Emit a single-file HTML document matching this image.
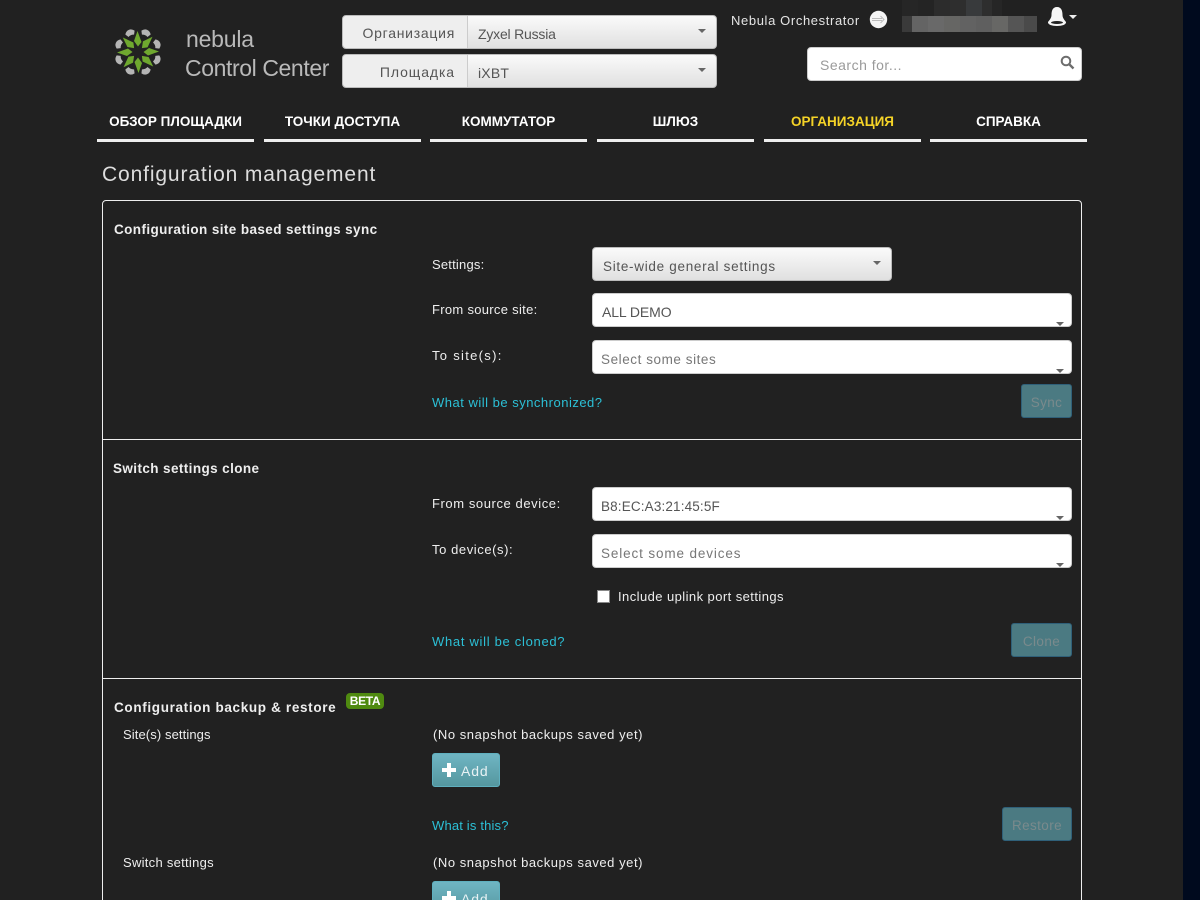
<!DOCTYPE html>
<html><head><meta charset="utf-8"><title>Configuration management</title>
<style>
html,body{margin:0;padding:0;width:1200px;height:900px;overflow:hidden;background:#212121}
body{position:relative;font-family:"Liberation Sans","DejaVu Sans",sans-serif;font-size:13px;color:#eee}
.a{position:absolute;box-sizing:border-box}
.t{position:absolute;white-space:nowrap;line-height:16px;height:16px}
.nav{position:absolute;top:112px;height:30px;width:157px;border-bottom:3px solid #eee;box-sizing:border-box;text-align:center;color:#fff;font-weight:bold;font-size:13.5px;line-height:19px;letter-spacing:0}
.sel{background:linear-gradient(#fafafa,#e0e0e0);border:1px solid #bbb;border-radius:4px}
.inp{background:#fff;border:1px solid #ccc;border-radius:4px}
.car{position:absolute;width:0;height:0;border-left:4px solid transparent;border-right:4px solid transparent;border-top:4px solid #666}
.lab{letter-spacing:.42px;color:#eee;margin-top:1px}
.h{font-weight:bold;font-size:13.5px;color:#eee;margin-top:1px;letter-spacing:.4px}
.lnk{color:#2cc0d6;letter-spacing:.5px;margin-top:1px}
.dis{background:#4b7a82;border:1px solid #2f6079;border-radius:3px;color:#7a8a8c;text-align:center;font-size:13.5px;line-height:35px;letter-spacing:.4px}
.add{background:linear-gradient(#6fb5c3,#55979f);border:1px solid #5fb0bf;border-radius:3px;color:#eef;font-size:14px;letter-spacing:.6px}
.line{position:absolute;left:102px;width:980px;height:1px;background:#eee}
.m{position:absolute;width:16px;height:16px}
</style></head><body>

<div class="a" style="left:1183px;top:0;width:17px;height:900px;background:#000a1e"></div>

<!-- logo -->
<svg class="a" style="left:108px;top:23px" width="60" height="58" viewBox="-30 -29 60 58">
<g fill="#b5b5b5">
<path d="M-5 -21 Q-3 -24 0 -24 Q3 -24 5 -21 L3 -17.500 Q0 -19 -3 -17.500 Z" transform="rotate(22.5)"/>
<path d="M-5 -21 Q-3 -24 0 -24 Q3 -24 5 -21 L3 -17.500 Q0 -19 -3 -17.500 Z" transform="rotate(67.5)"/>
<path d="M-5 -21 Q-3 -24 0 -24 Q3 -24 5 -21 L3 -17.500 Q0 -19 -3 -17.500 Z" transform="rotate(112.5)"/>
<path d="M-5 -21 Q-3 -24 0 -24 Q3 -24 5 -21 L3 -17.500 Q0 -19 -3 -17.500 Z" transform="rotate(157.5)"/>
<path d="M-5 -21 Q-3 -24 0 -24 Q3 -24 5 -21 L3 -17.500 Q0 -19 -3 -17.500 Z" transform="rotate(202.5)"/>
<path d="M-5 -21 Q-3 -24 0 -24 Q3 -24 5 -21 L3 -17.500 Q0 -19 -3 -17.500 Z" transform="rotate(247.5)"/>
<path d="M-5 -21 Q-3 -24 0 -24 Q3 -24 5 -21 L3 -17.500 Q0 -19 -3 -17.500 Z" transform="rotate(292.5)"/>
<path d="M-5 -21 Q-3 -24 0 -24 Q3 -24 5 -21 L3 -17.500 Q0 -19 -3 -17.500 Z" transform="rotate(337.5)"/>
</g>
<g fill="#6fa82f">
<path d="M-0.500 -21 L3.500 -10 L0 -5.500 L-4 -11 Z"/>
<path d="M-0.500 -21 L3.500 -10 L0 -5.500 L-4 -11 Z" transform="rotate(45)"/>
<path d="M-0.500 -21 L3.500 -10 L0 -5.500 L-4 -11 Z" transform="rotate(90)"/>
<path d="M-0.500 -21 L3.500 -10 L0 -5.500 L-4 -11 Z" transform="rotate(135)"/>
<path d="M-0.500 -21 L3.500 -10 L0 -5.500 L-4 -11 Z" transform="rotate(180)"/>
<path d="M-0.500 -21 L3.500 -10 L0 -5.500 L-4 -11 Z" transform="rotate(225)"/>
<path d="M-0.500 -21 L3.500 -10 L0 -5.500 L-4 -11 Z" transform="rotate(270)"/>
<path d="M-0.500 -21 L3.500 -10 L0 -5.500 L-4 -11 Z" transform="rotate(315)"/>
</g>
</svg>
<div class="t" style="left:186px;top:29px;font-size:23px;line-height:20px;height:20px;color:#b9b9b9;letter-spacing:-.2px">nebula</div>
<div class="t" style="left:185px;top:58px;font-size:23px;line-height:20px;height:20px;color:#b9b9b9;letter-spacing:-.4px">Control Center</div>

<!-- org/site selects -->
<div class="a sel" style="left:342px;top:15px;width:375px;height:34px"></div>
<div class="a" style="left:343px;top:16px;width:125px;height:32px;background:#eee;border-right:1px solid #ccc;border-radius:4px 0 0 4px"></div>
<div class="t" style="right:745px;top:25px;color:#555;font-size:14px;letter-spacing:.73px">Организация</div>
<div class="t" style="left:478px;top:26px;color:#555;font-size:14px;letter-spacing:-.2px">Zyxel Russia</div>
<div class="car" style="left:698px;top:29px"></div>
<div class="a sel" style="left:342px;top:54px;width:375px;height:34px"></div>
<div class="a" style="left:343px;top:55px;width:125px;height:32px;background:#eee;border-right:1px solid #ccc;border-radius:4px 0 0 4px"></div>
<div class="t" style="right:745px;top:64px;color:#555;font-size:14px;letter-spacing:.9px">Площадка</div>
<div class="t" style="left:478px;top:65px;color:#555;font-size:14px;letter-spacing:.2px">iXBT</div>
<div class="car" style="left:698px;top:68px"></div>

<!-- top right -->
<div class="t" style="left:731px;top:13px;color:#e4e4e4;letter-spacing:.62px">Nebula Orchestrator</div>
<svg class="a" style="left:869px;top:10px" width="19" height="19" viewBox="0 0 19 19"><circle cx="9.500" cy="9.500" r="8.700" fill="#f4f4f4"/><path d="M3 8.500H13M3 10.500H13M11.500 6L15 9.500L11.500 13" fill="none" stroke="#bbb" stroke-width="1"/></svg>
<!-- pixelated mosaic -->
<div class="m" style="left:902px;top:0;background:#262626"></div>
<div class="m" style="left:918px;top:0;background:#242424"></div>
<div class="m" style="left:934px;top:0;background:#2c2c2c"></div>
<div class="m" style="left:950px;top:0;background:#2e2e2e"></div>
<div class="m" style="left:966px;top:0;background:#383a3c"></div>
<div class="m" style="left:982px;top:0;width:10px;background:#2e2e2e"></div>
<div class="m" style="left:992px;top:0;width:10px;background:#262626"></div>
<div class="m" style="left:902px;top:16px;width:10px;background:#3a3a3a"></div>
<div class="m" style="left:912px;top:16px;background:#646464"></div>
<div class="m" style="left:928px;top:16px;background:#696969"></div>
<div class="m" style="left:944px;top:16px;background:#666664"></div>
<div class="m" style="left:960px;top:16px;background:#626262"></div>
<div class="m" style="left:976px;top:16px;background:#5f5f5f"></div>
<div class="m" style="left:992px;top:16px;background:#676765"></div>
<div class="m" style="left:1008px;top:16px;background:#555"></div>
<div class="m" style="left:1024px;top:16px;width:13px;background:#4a4a4a"></div>
<svg class="a" style="left:1047px;top:6px" width="20" height="21" viewBox="0 0 20 21"><path d="M10 1C5.500 1 4.500 5 4.500 9C4.500 12 2.500 14 1 16C0.500 18.500 5 20 10 20C15 20 19.500 18.500 19 16C17.500 14 15.500 12 15.500 9C15.500 5 14.500 1 10 1Z" fill="#f6f6f6"/><ellipse cx="10" cy="16.500" rx="6" ry="1.500" fill="#222"/></svg>
<div class="a" style="left:1069px;top:15px;width:0;height:0;border-left:4px solid transparent;border-right:4px solid transparent;border-top:4px solid #eee"></div>

<div class="a inp" style="left:807px;top:47px;width:275px;height:34px"></div>
<div class="t" style="left:820px;top:57px;color:#9a9a9a;font-size:14px;letter-spacing:.5px">Search for...</div>
<svg class="a" style="left:1060px;top:55px" width="15" height="15" viewBox="0 0 15 15"><circle cx="6" cy="6" r="4.300" fill="none" stroke="#6d6d6d" stroke-width="2"/><path d="M9.300 9.300L13.500 13.500" stroke="#6d6d6d" stroke-width="2.400"/></svg>

<!-- nav -->
<div class="nav" style="left:97px">ОБЗОР ПЛОЩАДКИ</div>
<div class="nav" style="left:264px">ТОЧКИ ДОСТУПА</div>
<div class="nav" style="left:430px">КОММУТАТОР</div>
<div class="nav" style="left:597px">ШЛЮЗ</div>
<div class="nav" style="left:764px;color:#f5d327">ОРГАНИЗАЦИЯ</div>
<div class="nav" style="left:930px">СПРАВКА</div>

<div class="t" style="left:102px;top:162px;font-size:21px;line-height:26px;height:26px;color:#ddd;letter-spacing:.87px">Configuration management</div>

<!-- panel -->
<div class="a" style="left:102px;top:200px;width:980px;height:760px;border:1px solid #eee;border-radius:4px"></div>
<div class="line" style="top:439px"></div>
<div class="line" style="top:678px"></div>

<div class="t h" style="left:114px;top:221px">Configuration site based settings sync</div>
<div class="t lab" style="left:432px;top:256px;letter-spacing:.2px">Settings:</div>
<div class="a sel" style="left:592px;top:247px;width:300px;height:34px"></div>
<div class="t" style="left:603px;top:259px;color:#555;font-size:13.5px;letter-spacing:.7px">Site-wide general settings</div>
<div class="car" style="left:873px;top:261px"></div>

<div class="t lab" style="left:432px;top:301px;letter-spacing:.3px">From source site:</div>
<div class="a inp" style="left:592px;top:293px;width:480px;height:34px"></div>
<div class="t" style="left:602px;top:304px;color:#555;font-size:14px;letter-spacing:-.1px">ALL DEMO</div>
<div class="car" style="left:1056px;top:322px"></div>

<div class="t lab" style="left:432px;top:347px;letter-spacing:1.3px">To site(s):</div>
<div class="a inp" style="left:592px;top:340px;width:480px;height:34px"></div>
<div class="t" style="left:601px;top:352px;color:#777;letter-spacing:.56px;font-size:13.5px">Select some sites</div>
<div class="car" style="left:1056px;top:369px"></div>

<div class="t lnk" style="left:432px;top:394px">What will be synchronized?</div>
<div class="a dis" style="left:1021px;top:384px;width:51px;height:34px">Sync</div>

<div class="t h" style="left:113px;top:460px">Switch settings clone</div>
<div class="t lab" style="left:432px;top:495px;letter-spacing:.58px">From source device:</div>
<div class="a inp" style="left:592px;top:487px;width:480px;height:34px"></div>
<div class="t" style="left:601px;top:499px;color:#555;font-size:13.5px;letter-spacing:.15px">B8:EC:A3:21:45:5F</div>
<div class="car" style="left:1056px;top:516px"></div>

<div class="t lab" style="left:432px;top:541px;letter-spacing:.58px">To device(s):</div>
<div class="a inp" style="left:592px;top:534px;width:480px;height:34px"></div>
<div class="t" style="left:601px;top:546px;color:#777;letter-spacing:.87px;font-size:13.5px">Select some devices</div>
<div class="car" style="left:1056px;top:563px"></div>

<div class="a" style="left:597px;top:590px;width:13px;height:13px;background:#fff;border:1px solid #888"></div>
<div class="t lab" style="left:618px;top:588px;letter-spacing:.43px">Include uplink port settings</div>

<div class="t lnk" style="left:432px;top:633px;letter-spacing:.7px">What will be cloned?</div>
<div class="a dis" style="left:1011px;top:623px;width:61px;height:34px">Clone</div>

<div class="t h" style="left:114px;top:699px;letter-spacing:.66px">Configuration backup &amp; restore</div>
<div class="a" style="left:346px;top:693px;width:38px;height:16px;background:#4f8a10;border-radius:4px;color:#fff;font-weight:bold;font-size:12px;line-height:16px;text-align:center;letter-spacing:-.3px">BETA</div>

<div class="t lab" style="left:123px;top:726px;letter-spacing:.1px">Site(s) settings</div>
<div class="t lab" style="left:433px;top:726px;letter-spacing:.55px">(No snapshot backups saved yet)</div>
<div class="a add" style="left:432px;top:753px;width:68px;height:34px"></div>
<svg class="a" style="left:442px;top:763px" width="14" height="14" viewBox="0 0 14 14"><path d="M5 0H9V5H14V9H9V14H5V9H0V5H5Z" fill="#fff"/></svg>
<div class="t" style="left:461px;top:763px;color:#e8f2f4;font-size:14px;letter-spacing:.9px">Add</div>

<div class="t lnk" style="left:432px;top:817px;letter-spacing:.17px">What is this?</div>
<div class="a dis" style="left:1002px;top:807px;width:70px;height:34px">Restore</div>

<div class="t lab" style="left:123px;top:854px;letter-spacing:.28px">Switch settings</div>
<div class="t lab" style="left:433px;top:854px;letter-spacing:.55px">(No snapshot backups saved yet)</div>
<div class="a add" style="left:432px;top:881px;width:68px;height:34px"></div>
<svg class="a" style="left:442px;top:891px" width="14" height="14" viewBox="0 0 14 14"><path d="M5 0H9V5H14V9H9V14H5V9H0V5H5Z" fill="#fff"/></svg>
<div class="t" style="left:461px;top:891px;color:#e8f2f4;font-size:14px;letter-spacing:.9px">Add</div>

</body></html>
